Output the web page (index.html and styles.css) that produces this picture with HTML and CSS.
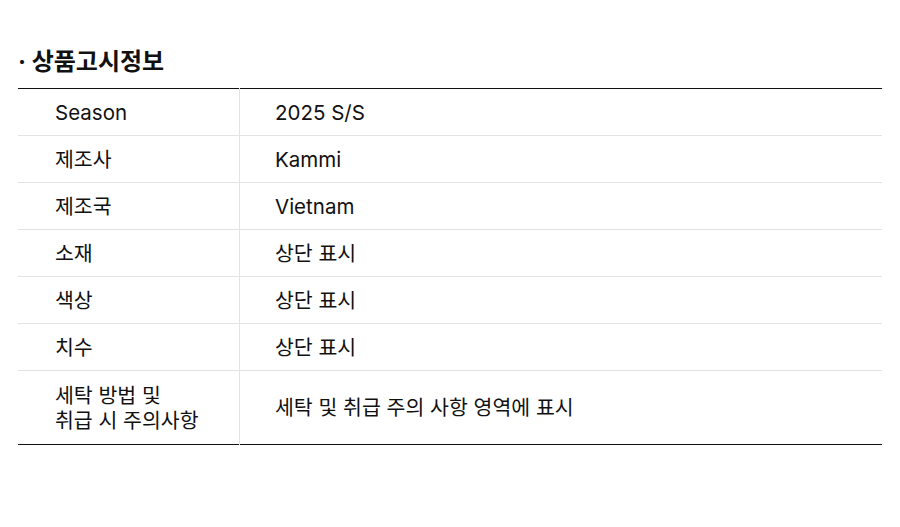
FILE: index.html
```html
<!DOCTYPE html>
<html lang="ko">
<head>
<meta charset="utf-8">
<link rel="stylesheet" href="styles.css">
</head>
<body>
<section class="notice">
  <h2 class="title">· 상품고시정보</h2>
  <table class="info">
    <tr><th>Season</th><td>2025 S/S</td></tr>
    <tr><th>제조사</th><td>Kammi</td></tr>
    <tr><th>제조국</th><td>Vietnam</td></tr>
    <tr><th>소재</th><td>상단 표시</td></tr>
    <tr><th>색상</th><td>상단 표시</td></tr>
    <tr><th>치수</th><td>상단 표시</td></tr>
    <tr class="tall"><th>세탁 방법 및<br>취급 시 주의사항</th><td>세탁 및 취급 주의 사항 영역에 표시</td></tr>
  </table>
</section>
</body>
</html>
```

FILE: styles.css
```css
html, body {
  margin: 0;
  padding: 0;
  background: #fff;
}
body {
  font-family: Inter, "Noto Sans CJK KR", sans-serif;
  color: #111;
}
.notice {
  padding: 46px 18px 0 18px;
}
.title {
  margin: 0 0 11px 0;
  font-size: 24px;
  font-weight: 700;
  line-height: 31px;
}
.info {
  width: 100%;
  border-collapse: collapse;
  border-top: 1.5px solid #111;
  border-bottom: 1.5px solid #111;
}
.info th, .info td {
  text-align: left;
  font-size: 20.5px;
  font-weight: 400;
  line-height: 25px;
  height: 46px;
  padding: 0;
  border-top: 1px solid #e3e3e3;
  vertical-align: middle;
}
.info tr:first-child th, .info tr:first-child td {
  border-top: none;
}
.info th {
  width: 184px;
  padding-left: 37px;
  border-right: 1px solid #e3e3e3;
}
.info td {
  padding-left: 35px;
}
.info .tall th, .info .tall td {
  height: 73px;
}
```
